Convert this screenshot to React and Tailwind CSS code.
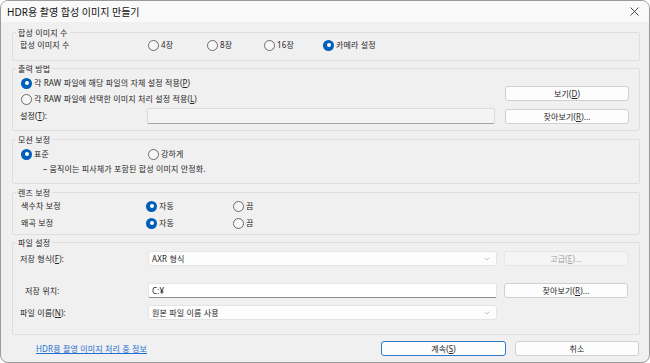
import { ChevronDown } from 'lucide-react'

function Radio({ checked, children, className = '' }) {
  return (
    <div className={`flex items-center gap-[2px] ${className}`}>
      {checked ? (
        <span className="flex w-[11px] h-[11px] shrink-0 items-center justify-center rounded-full bg-[#005fb8]">
          <span className="w-[4px] h-[4px] rounded-full bg-white" />
        </span>
      ) : (
        <span className="w-[11px] h-[11px] shrink-0 rounded-full border border-[#6b6b6b] bg-[#f7f7f7]" />
      )}
      <span>{children}</span>
    </div>
  )
}

function Group({ title, className = '', children }) {
  return (
    <div className={`border border-[#dedede] rounded-[2px] ${className}`}>
      <div className="-mt-[6px] ml-[3px] w-fit px-[2px] h-[11px] leading-[11px] bg-[#f0f0f0]">{title}</div>
      {children}
    </div>
  )
}

function Btn({ children, className = '' }) {
  return (
    <button className={`flex items-center justify-center h-[15px] rounded-[3px] border ${className}`}>
      {children}
    </button>
  )
}

function Select({ children }) {
  return (
    <div className="flex items-center justify-between w-[349px] h-[15px] pl-[3px] pr-[5px] rounded-[3px] border border-[#e4e4e4] bg-[#fdfdfd]">
      <span>{children}</span>
      <ChevronDown size={8} strokeWidth={1.3} className="text-[#777777]" />
    </div>
  )
}

export default function App() {
  return (
    <div className="w-[650px] h-[363px] bg-white">
      <div className="flex flex-col w-[650px] h-[363px] overflow-hidden rounded-[8px] border border-[#9a9a9a] bg-[#f0f0f0] text-[8px] leading-[14px] tracking-[0.15px] text-[#262626] font-['Noto_Sans','Noto_Sans_CJK_KR',sans-serif]">
        {/* title bar */}
        <div className="flex items-center justify-between h-[21px] pl-[6px] pr-[10px] bg-[#f9f9f9]">
          <span className="text-[10px] tracking-normal text-[#111111]">HDR용 촬영 합성 이미지 만들기</span>
          <svg width="9" height="9" viewBox="0 0 9 9" className="text-[#333333]">
            <path d="M0.5 0.5 L8.5 8.5 M8.5 0.5 L0.5 8.5" stroke="currentColor" strokeWidth="0.9" fill="none" />
          </svg>
        </div>

        <div className="flex flex-col ml-[11px] w-[628px]">
          {/* 합성 이미지 수 */}
          <Group title="합성 이미지 수" className="mt-[10px] pb-[8px]">
            <div className="flex items-center h-[14px] pl-[7px]">
              <span className="w-[128px]">합성 이미지 수</span>
              <Radio className="w-[59px]">4장</Radio>
              <Radio className="w-[57px]">8장</Radio>
              <Radio className="w-[59px]">16장</Radio>
              <Radio checked>카메라 설정</Radio>
            </div>
          </Group>

          {/* 출력 방법 */}
          <Group title="출력 방법" className="mt-[7px] pb-[6px]">
            <div className="flex items-end mt-[2px] pl-[8px] pr-[10px]">
              <div className="flex flex-col flex-1 gap-[2px]">
                <Radio checked className="h-[14px]">각 RAW 파일에 해당 파일의 자체 설정 적용(<u>P</u>)</Radio>
                <Radio className="h-[14px]">각 RAW 파일에 선택한 이미지 처리 설정 적용(<u>L</u>)</Radio>
              </div>
              <Btn className="w-[124px] mb-[5px] border-[#d0d0d0] bg-[#fdfdfd]">보기(<u>D</u>)</Btn>
            </div>
            <div className="flex items-center mt-[1px] pl-[7px] pr-[10px]">
              <span className="w-[127px]">설정(<u>T</u>):</span>
              <div className="w-[348px] h-[16px] rounded-[2px] border border-[#dadada] border-b-[#a5a5a5] bg-[#f4f4f4]" />
              <Btn className="w-[124px] ml-[10px] mt-[2px] border-[#d0d0d0] bg-[#fdfdfd]">찾아보기(<u>R</u>)...</Btn>
            </div>
          </Group>

          {/* 모션 보정 */}
          <Group title="모션 보정" className="mt-[8px] pb-[7px]">
            <div className="flex items-center h-[14px] mt-[2px] pl-[8px]">
              <Radio checked className="w-[127px]">표준</Radio>
              <Radio>강하게</Radio>
            </div>
            <div className="h-[14px] mt-[1px] pl-[30px]">– 움직이는 피사체가 포함된 합성 이미지 안정화.</div>
          </Group>

          {/* 렌즈 보정 */}
          <Group title="렌즈 보정" className="mt-[8px] pb-[4px]">
            <div className="flex items-center h-[14px] mt-[1px] pl-[8px]">
              <span className="w-[125px]">색수차 보정</span>
              <Radio checked className="w-[87px]">자동</Radio>
              <Radio>끔</Radio>
            </div>
            <div className="flex items-center h-[14px] mt-[3px] pl-[8px]">
              <span className="w-[125px]">왜곡 보정</span>
              <Radio checked className="w-[87px]">자동</Radio>
              <Radio>끔</Radio>
            </div>
          </Group>

          {/* 파일 설정 */}
          <Group title="파일 설정" className="mt-[7px] pb-[14px]">
            <div className="flex items-center mt-[3px] pl-[7px] pr-[10px]">
              <span className="w-[128px]">저장 형식(<u>F</u>):</span>
              <Select>AXR 형식</Select>
              <Btn className="w-[124px] ml-[7px] border-[#e6e6e6] bg-[#f5f5f5] text-[#a3a3a3]">고급(<u>E</u>)...</Btn>
            </div>
            <div className="flex items-center mt-[17px] pl-[7px] pr-[10px]">
              <span className="w-[128px] pl-[5px]">저장 위치:</span>
              <div className="flex items-center w-[349px] h-[15px] pl-[3px] rounded-[2px] border border-[#e4e4e4] border-b-[#8c8c8c] bg-white">C:¥</div>
              <Btn className="w-[124px] ml-[7px] border-[#d0d0d0] bg-[#fdfdfd]">찾아보기(<u>R</u>)...</Btn>
            </div>
            <div className="flex items-center mt-[7px] pl-[7px] pr-[10px]">
              <span className="w-[128px]">파일 이름(<u>N</u>):</span>
              <Select>원본 파일 이름 사용</Select>
            </div>
          </Group>

          {/* footer */}
          <div className="flex items-center mt-[6px]">
            <a className="ml-[24px] text-[#1f6fd0] underline">HDR용 촬영 이미지 처리 중 정보</a>
            <Btn className="w-[125px] ml-auto border-[#2f78c8] bg-[#fdfdfd]">계속(<u>S</u>)</Btn>
            <Btn className="w-[124px] ml-[9px] mr-[1px] border-[#d0d0d0] bg-[#fdfdfd]">취소</Btn>
          </div>
        </div>
      </div>
    </div>
  )
}
